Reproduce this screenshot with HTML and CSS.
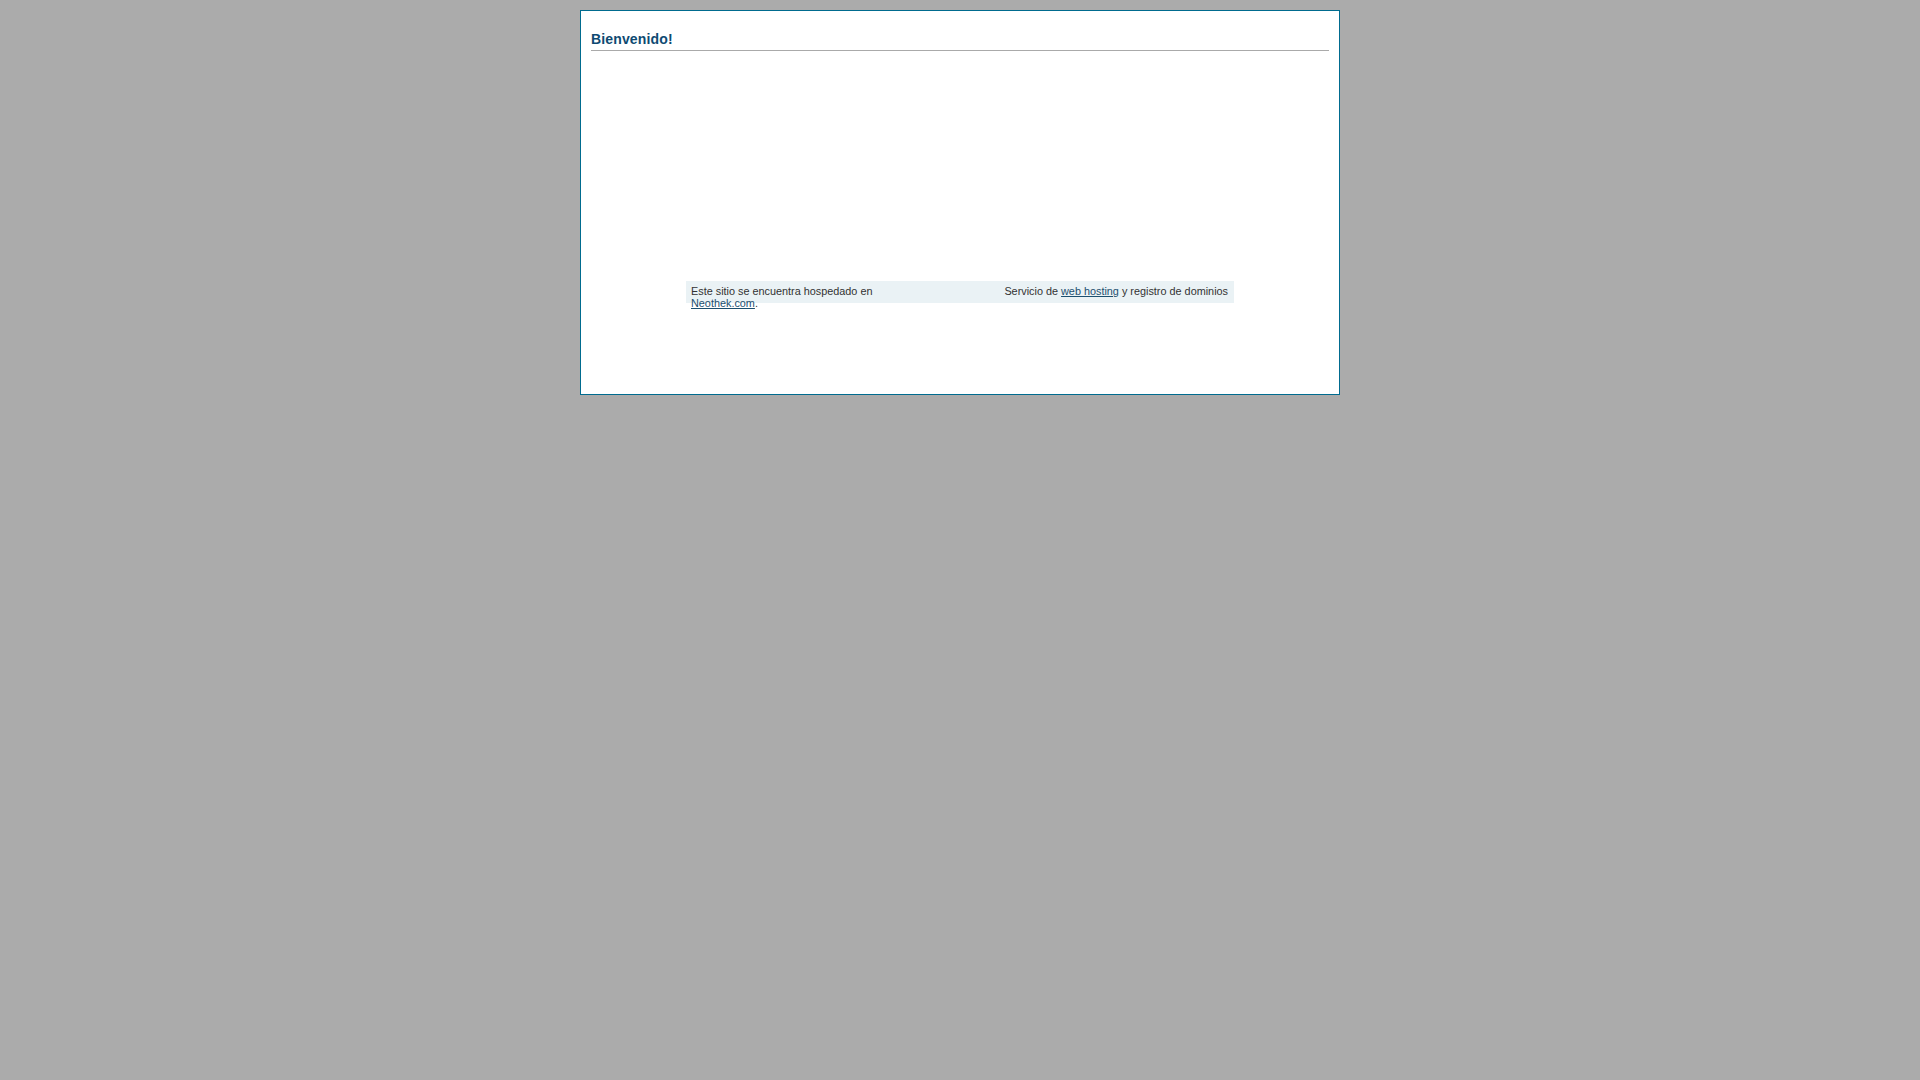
FILE: index.html
```html
<!DOCTYPE html>
<html lang="es">
<head>
<meta charset="utf-8">
<title>Bienvenido!</title>
<link rel="stylesheet" href="styles.css">
</head>
<body>
<div class="box">
  <h1 class="title">Bienvenido!</h1>
  <div class="hostbar">
    <div class="cell left">Este sitio se encuentra hospedado en <a href="#">Neothek.com</a>.</div>
    <div class="cell right">Servicio de <a href="#">web hosting</a> y registro de dominios</div>
  </div>
</div>
</body>
</html>
```

FILE: styles.css
```css
html, body {
  margin: 0;
  padding: 0;
  background: #ababab;
}
body {
  font-family: "Liberation Sans", Arial, sans-serif;
  padding-top: 10px;
}
.box {
  box-sizing: border-box;
  width: 760px;
  height: 385px;
  margin: 0 auto;
  background: #ffffff;
  border: 1px solid #006b8f;
  padding: 10px;
}
.title {
  margin: 10px 0 0;
  padding: 0 0 2px;
  font-size: 14px;
  letter-spacing: 0.15px;
  line-height: 17px;
  font-weight: bold;
  color: #0e4a72;
  border-bottom: 1px solid #aaaaaa;
}
.hostbar {
  width: 548px;
  height: 22px;
  margin: 230px auto 0;
  background: #eaf2f5;
  display: flex;
  justify-content: space-between;
  align-items: flex-start;
  font-size: 10.85px;
  line-height: 11.5px;
  color: #333333;
}
.cell {
  padding-top: 5px;
}
.left {
  width: 210px;
  padding-left: 5px;
}
.right {
  padding-right: 6px;
  text-align: right;
  white-space: nowrap;
}
.cell a {
  color: #1c4f6f;
  text-decoration: underline;
}
```
